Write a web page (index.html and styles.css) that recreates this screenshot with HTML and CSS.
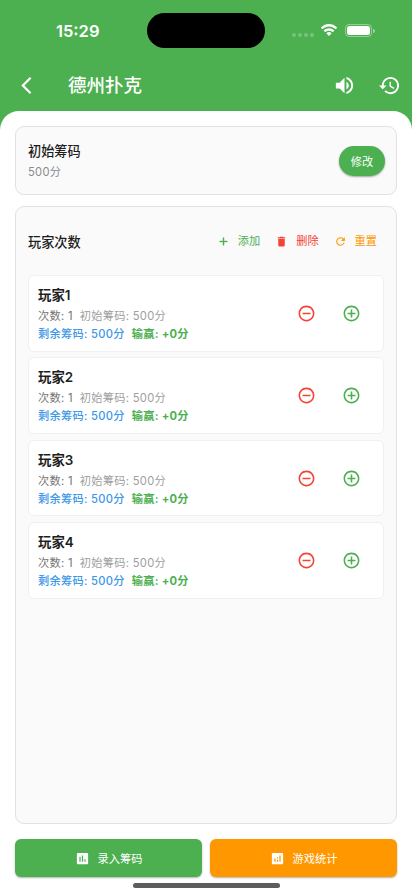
FILE: index.html
```html
<!DOCTYPE html>
<html lang="zh-CN">
<head>
  <meta charset="UTF-8">
  <meta name="viewport" content="width=device-width, initial-scale=1.0">
  <title>德州扑克</title>
  <link rel="stylesheet" href="styles.css">
</head>
<body>
  <div class="app">
    <!-- 状态栏 -->
    <div class="status-bar">
      <span class="time">15:29</span>
      <div class="island"></div>
      <div class="status-icons">
        <div class="dots"><i></i><i></i><i></i><i></i></div>
        <svg class="wifi" viewBox="0 0 18 13">
          <path d="M9 2.6c2.4 0 4.6.9 6.3 2.5.1.1.3.1.5 0l1.2-1.2c.1-.2.1-.4 0-.5C14.7 1.2 12 0 9 0S3.3 1.200 1 3.400c-.1.100-.1.300 0 .5l1.200 1.200c.2.1.4.1.5 0C4.400 3.500 6.600 2.600 9 2.600z"/>
          <path d="M9 6.700c1.300 0 2.500.5 3.500 1.300.1.100.3.100.5 0l1.200-1.200c.1-.2.1-.4 0-.5C12.800 5 11 4.200 9 4.200S5.200 5 3.800 6.300c-.1.100-.1.300 0 .5L5 8c.2.100.4.100.5 0 1-.8 2.200-1.300 3.500-1.300z"/>
          <path d="M11.400 9.500c.1-.1.1-.3 0-.5a3.700 3.700 0 0 0-4.800 0c-.1.200-.1.400 0 .5l2.100 2.200c.2.200.4.200.6 0z"/>
        </svg>
        <div class="battery"><div class="level"></div></div>
        <div class="battery-cap"></div>
      </div>
    </div>

    <!-- 导航栏 -->
    <header class="nav-bar">
      <svg class="back" viewBox="0 0 12 20"><path d="M10.500 1.500L2 10l8.500 8.500"/></svg>
      <h1>德州扑克</h1>
      <svg class="nav-icon" viewBox="0 0 24 24"><path d="M3 9v6h4l5 5V4L7 9H3zm13.500 3c0-1.770-1.020-3.290-2.500-4.030v8.050c1.480-.73 2.500-2.250 2.500-4.020zM14 3.230v2.060c2.890.86 5 3.540 5 6.710s-2.110 5.850-5 6.710v2.060c4.010-.91 7-4.490 7-8.770s-2.990-7.860-7-8.770z"/></svg>
      <svg class="nav-icon" viewBox="0 0 24 24"><path d="M13 3c-4.970 0-9 4.030-9 9H1l3.890 3.890.07.14L9 12H6c0-3.870 3.130-7 7-7s7 3.130 7 7-3.130 7-7 7c-1.930 0-3.680-.79-4.940-2.060l-1.420 1.420C8.270 19.990 10.510 21 13 21c4.970 0 9-4.030 9-9s-4.030-9-9-9zm-1 5v5l4.280 2.540.72-1.210-3.500-2.080V8H12z"/></svg>
    </header>

    <main class="sheet">
      <section class="panel chips">
        <div>
          <h2>初始筹码</h2>
          <p class="chips-value">500分</p>
        </div>
        <button class="edit-btn">修改</button>
      </section>

      <section class="panel players">
        <div class="players-head">
          <h2>玩家次数</h2>
          <button class="text-btn green">
            <svg class="add" viewBox="0 0 24 24"><path d="M19 13h-6v6h-2v-6H5v-2h6V5h2v6h6v2z"/></svg>添加
          </button>
          <button class="text-btn red">
            <svg viewBox="0 0 24 24"><path d="M6 19c0 1.100.9 2 2 2h8c1.100 0 2-.9 2-2V7H6v12zM19 4h-3.500l-1-1h-5l-1 1H5v2h14V4z"/></svg>删除
          </button>
          <button class="text-btn orange">
            <svg viewBox="0 0 24 24"><path d="M17.650 6.350A7.958 7.958 0 0 0 12 4c-4.420 0-7.990 3.580-7.990 8s3.570 8 7.990 8c3.730 0 6.840-2.550 7.730-6h-2.080A5.990 5.990 0 0 1 12 18c-3.310 0-6-2.690-6-6s2.690-6 6-6c1.660 0 3.140.69 4.220 1.780L13 11h7V4l-2.350 2.350z"/></svg>重置
          </button>
        </div>
        <div id="playerList" class="player-list"></div>
      </section>

      <div class="actions">
        <button class="action-btn bg-green">
          <svg viewBox="0 0 24 24"><path d="M19 3H5c-1.100 0-2 .9-2 2v14c0 1.100.9 2 2 2h14c1.100 0 2-.9 2-2V5c0-1.100-.9-2-2-2zM9 17H7V9h2v8zm4 0h-2V7h2v10zm4 0h-2v-4h2v4z"/></svg>录入筹码
        </button>
        <button class="action-btn bg-orange">
          <svg viewBox="0 0 24 24"><path d="M19 3H5c-1.100 0-2 .9-2 2v14c0 1.100.9 2 2 2h14c1.100 0 2-.9 2-2V5c0-1.100-.9-2-2-2zM9 17H7v-5h2v5zm4 0h-2v-3h2v3zm0-5h-2v-2h2v2zm4 5h-2V7h2v10z"/></svg>游戏统计
        </button>
      </div>
      <div class="home-indicator"></div>
    </main>
  </div>

  <script>
    const players = [
      { name: '玩家1', count: 1, initial: 500, remain: 500, result: '+0' },
      { name: '玩家2', count: 1, initial: 500, remain: 500, result: '+0' },
      { name: '玩家3', count: 1, initial: 500, remain: 500, result: '+0' },
      { name: '玩家4', count: 1, initial: 500, remain: 500, result: '+0' }
    ];

    const ring = 'M12 2C6.480 2 2 6.480 2 12s4.480 10 10 10 10-4.480 10-10S17.520 2 12 2zm0 18c-4.410 0-8-3.590-8-8s3.590-8 8-8 8 3.590 8 8-3.590 8-8 8z';

    // 渲染玩家列表
    document.getElementById('playerList').innerHTML = players.map(p => `
      <div class="player">
        <div class="player-info">
          <h3>${p.name}</h3>
          <div class="line"><span class="count">次数: ${p.count}</span><span class="initial">初始筹码: ${p.initial}分</span></div>
          <div class="line"><span class="remain">剩余筹码: ${p.remain}分</span><span class="result">输赢: ${p.result}分</span></div>
        </div>
        <button class="round-btn red"><svg viewBox="0 0 24 24"><path d="M7 11v2h10v-2H7z${ring}"/></svg></button>
        <button class="round-btn green"><svg viewBox="0 0 24 24"><path d="M13 7h-2v4H7v2h4v4h2v-4h4v-2h-4V7z${ring}"/></svg></button>
      </div>
    `).join('');
  </script>
</body>
</html>
```

FILE: styles.css
```css
* {
  box-sizing: border-box;
}
body {
  margin: 0;
  font-family: Inter, 'Noto Sans CJK SC', sans-serif;
  background-color: #4caf50;
  color: #1d1d1d;
}
h1, h2, h3, p {
  margin: 0;
}
button {
  font-family: inherit;
  border: none;
  padding: 0;
  background: none;
  cursor: pointer;
}
svg {
  display: block;
  fill: currentColor;
  flex-shrink: 0;
}
.green { color: #4caf50; }
.red { color: #f44336; }
.orange { color: #ff9800; }

.app {
  height: 896px;
  display: flex;
  flex-direction: column;
  overflow: hidden;
}

/* 状态栏 */
.status-bar {
  height: 61px;
  display: flex;
  align-items: center;
  color: #fff;
  flex-shrink: 0;
}
.time {
  width: 147px;
  padding-left: 56px;
  font-size: 16.5px;
  font-weight: 600;
  line-height: 20px;
}
.island {
  width: 118px;
  height: 35px;
  border-radius: 18px;
  background-color: #000;
}
.status-icons {
  display: flex;
  align-items: center;
  margin-left: 27px;
}
.dots {
  display: flex;
  gap: 2px;
  margin: 9px 6px 0 0;
}
.dots i {
  width: 4px;
  height: 4px;
  border-radius: 50%;
  background-color: rgba(255, 255, 255, 0.25);
}
.wifi {
  width: 18px;
  height: 13px;
}
.battery {
  width: 27px;
  height: 13px;
  margin-left: 7px;
  padding: 1px;
  border: 1px solid rgba(255, 255, 255, 0.4);
  border-radius: 4px;
}
.level {
  height: 9px;
  border-radius: 2.5px;
  background-color: #fff;
}
.battery-cap {
  width: 1.5px;
  height: 4px;
  margin-left: 1px;
  border-radius: 0 2px 2px 0;
  background-color: rgba(255, 255, 255, 0.45);
}

/* 导航栏 */
.nav-bar {
  height: 50px;
  display: flex;
  align-items: center;
  padding: 0 11px 2px 21px;
  color: #fff;
  flex-shrink: 0;
}
.back {
  width: 11px;
  height: 19px;
  fill: none;
  stroke: #fff;
  stroke-width: 2.4;
}
.nav-bar h1 {
  flex: 1;
  margin-left: 36px;
  font-size: 18.5px;
  font-weight: 500;
  line-height: 26px;
}
.nav-icon {
  width: 23px;
  height: 23px;
}
.nav-icon + .nav-icon {
  margin-left: 22px;
}

.sheet {
  flex: 1;
  display: flex;
  flex-direction: column;
  padding: 15px 15px 0;
  background-color: #fff;
  border-radius: 19px 19px 0 0;
}
.panel {
  background-color: #fafafa;
  border: 1px solid #e2e2e2;
  border-radius: 9px;
}
.panel h2 {
  font-size: 13.2px;
  font-weight: 500;
  line-height: 20px;
}
.chips {
  height: 69px;
  display: flex;
  align-items: center;
  justify-content: space-between;
  padding: 0 11px 0 12px;
}
.chips-value {
  margin-top: 3px;
  font-size: 11.2px;
  line-height: 17px;
  letter-spacing: 0.3px;
  color: #8b8b8b;
}
.edit-btn {
  width: 46px;
  height: 30px;
  border-radius: 15px;
  background-color: #4caf50;
  color: #fff;
  font-size: 11.2px;
  box-shadow: 0 1px 2px rgba(0, 0, 0, 0.35);
}

/* 玩家列表 */
.players {
  height: 618px;
  margin-top: 11px;
  padding: 0 12px;
}
.players-head {
  height: 68px;
  display: flex;
  align-items: center;
  padding-top: 1px;
}
.players-head h2 {
  flex: 1;
}
.text-btn {
  display: flex;
  align-items: center;
  gap: 8px;
  margin-right: 7px;
  font-size: 11.2px;
  line-height: 17px;
}
.text-btn + .text-btn {
  margin-left: 8px;
}
.text-btn svg {
  width: 13px;
  height: 13px;
}
.text-btn .add {
  stroke: currentColor;
  stroke-width: 0.6;
}
.player-list {
  display: flex;
  flex-direction: column;
  gap: 5.9px;
}
.player {
  height: 76.5px;
  display: flex;
  align-items: center;
  padding: 0 22px 0 9px;
  background-color: #fff;
  border: 1px solid #f0f0f0;
  border-radius: 6px;
}
.player-info {
  flex: 1;
  padding-top: 1px;
}
.player h3 {
  font-size: 13.4px;
  font-weight: 600;
  line-height: 20px;
  margin-bottom: 2px;
}
.line {
  display: flex;
  gap: 7px;
  font-size: 11.2px;
  line-height: 18px;
  letter-spacing: 0.3px;
  white-space: nowrap;
}
.count { color: #757575; }
.initial { color: #9e9e9e; }
.remain {
  color: #3c97e8;
  font-weight: 500;
}
.result {
  color: #4caf50;
  font-weight: 700;
}
.round-btn + .round-btn {
  margin-left: 26px;
}
.round-btn svg {
  width: 19px;
  height: 19px;
}

/* 底部按钮 */
.actions {
  display: grid;
  grid-template-columns: 1fr 1fr;
  gap: 8px;
  margin-top: 15px;
}
.action-btn {
  height: 38px;
  display: flex;
  align-items: center;
  justify-content: center;
  gap: 8px;
  border-radius: 6px;
  color: #fff;
  font-size: 11.2px;
  box-shadow: 0 1px 2px rgba(0, 0, 0, 0.3);
}
.action-btn svg {
  width: 15px;
  height: 15px;
}
.bg-green { background-color: #4caf50; }
.bg-orange { background-color: #ff9800; }
.home-indicator {
  width: 147px;
  height: 5px;
  margin: 6px auto 0;
  border-radius: 3px;
  background-color: #5c5c5c;
}
```
